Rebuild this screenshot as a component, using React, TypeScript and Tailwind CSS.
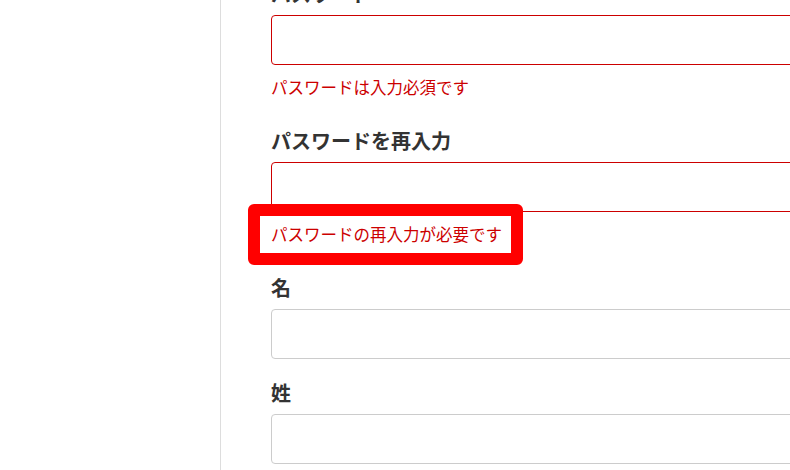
import React from 'react'

const font = { fontFamily: '"Noto Sans CJK JP", "Noto Sans", sans-serif' }

type FieldProps = {
  label: string
  error?: string
  highlight?: boolean
}

function Field({ label, error, highlight }: FieldProps) {
  return (
    <div className="flex flex-col mb-[19px]">
      <label className="block text-[20px] leading-[30px] font-bold text-[#333] mb-[6px]">{label}</label>
      <div
        className={`h-[50px] w-[600px] rounded-[4px] border bg-white ${
          error ? 'border-[#c00]' : 'border-[#ccc]'
        }`}
      />
      {error && (
        <p className="mt-[10px] mb-[7px] text-[16.5px] leading-[25px] text-[#c00]">
          <span className="relative inline-block">
            {highlight && (
              <span className="absolute -left-[23px] -right-[21px] -top-[18px] -bottom-[18px] rounded-[6px] border-[12px] border-[#f00] bg-white" />
            )}
            <span className="relative">{error}</span>
          </span>
        </p>
      )}
    </div>
  )
}

export default function App() {
  return (
    <div className="flex h-[470px] w-[790px] overflow-hidden bg-white" style={font}>
      {/* サイドバー */}
      <div className="w-[221px] shrink-0 border-r border-[#ddd]" />

      {/* フォーム */}
      <div className="flex-1 flex flex-col pl-[50px] -mt-[21px]">
        <Field label="パスワード" error="パスワードは入力必須です" />
        <Field label="パスワードを再入力" error="パスワードの再入力が必要です" highlight />
        <Field label="名" />
        <Field label="姓" />
      </div>
    </div>
  )
}
